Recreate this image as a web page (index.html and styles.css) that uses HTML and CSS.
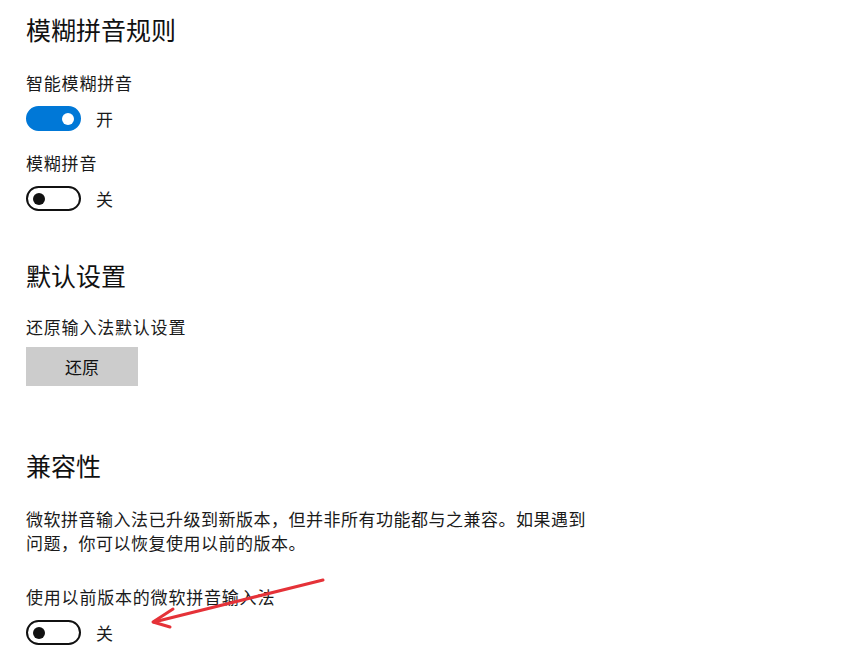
FILE: index.html
```html
<!DOCTYPE html>
<html lang="zh-CN">
<head>
    <meta charset="UTF-8">
    <meta name="viewport" content="width=device-width, initial-scale=1.0">
    <title>微软拼音 - 设置</title>
    <link rel="stylesheet" href="styles.css">
</head>
<body>

    <div class="page">

        <!-- 模糊拼音规则 -->
        <section class="section first">
            <h2>模糊拼音规则</h2>

            <div class="setting">
                <div class="label">智能模糊拼音</div>
                <div class="toggle-row">
                    <span class="toggle on"><span class="knob"></span></span>
                    <span class="state">开</span>
                </div>
            </div>

            <div class="setting">
                <div class="label">模糊拼音</div>
                <div class="toggle-row">
                    <span class="toggle"><span class="knob"></span></span>
                    <span class="state">关</span>
                </div>
            </div>
        </section>

        <!-- 默认设置 -->
        <section class="section defaults">
            <h2>默认设置</h2>
            <div class="label">还原输入法默认设置</div>
            <button class="btn">还原</button>
        </section>

        <!-- 兼容性 -->
        <section class="section compat">
            <h2>兼容性</h2>
            <p class="desc">微软拼音输入法已升级到新版本，但并非所有功能都与之兼容。如果遇到问题，你可以恢复使用以前的版本。</p>

            <div class="setting">
                <div class="label">使用以前版本的微软拼音输入法</div>
                <div class="toggle-row">
                    <span class="toggle"><span class="knob"></span></span>
                    <span class="state">关</span>
                </div>
            </div>
        </section>

        <!-- red annotation arrow -->
        <svg class="arrow" width="200" height="70" viewBox="140 568 200 70">
            <line x1="323" y1="580" x2="154" y2="622" stroke="#e53238" stroke-width="3" stroke-linecap="round"/>
            <polyline points="173,609 153,622 170,627" fill="none" stroke="#e53238" stroke-width="3" stroke-linecap="round" stroke-linejoin="round"/>
        </svg>
    </div>

</body>
</html>
```

FILE: styles.css
```css
* {
    margin: 0;
    padding: 0;
    box-sizing: border-box;
}

body {
    font-family: "Noto Sans CJK SC", "Noto Sans", sans-serif;
    background-color: #fff;
    color: #1a1a1a;
}

.page {
    position: relative;
    padding: 13px 26px 0 26px;
    min-height: 670px;
}

/* Section headings */
h2 {
    font-size: 25px;
    font-weight: 400;
    line-height: 32px;
    color: #111;
    margin-bottom: 26px;
}

.defaults {
    margin-top: 48px;
}

.defaults h2 {
    margin-bottom: 24px;
}

.compat {
    margin-top: 63px;
}

.compat h2 {
    margin-bottom: 26px;
}

/* Settings rows */
.label {
    font-size: 17px;
    line-height: 24px;
    letter-spacing: 0.8px;
}

.setting + .setting {
    margin-top: 20px;
}

.toggle-row {
    display: flex;
    align-items: center;
    gap: 15px;
    margin-top: 11px;
}

.state {
    font-size: 17px;
    line-height: 25px;
}

/* Toggle switch */
.toggle {
    display: flex;
    align-items: center;
    width: 55px;
    height: 25px;
    border: 2.5px solid #111;
    border-radius: 13px;
    padding: 0 5px;
}

.toggle .knob {
    width: 12px;
    height: 12px;
    border-radius: 50%;
    background-color: #111;
}

.toggle.on {
    background-color: #0078d7;
    border-color: #0078d7;
    justify-content: flex-end;
}

.toggle.on .knob {
    background-color: #fff;
}

/* Button */
.btn {
    display: block;
    margin-top: 8px;
    width: 112px;
    height: 39px;
    border: none;
    background-color: #cccccc;
    font-family: inherit;
    font-size: 17px;
    color: #111;
}

/* Description paragraph */
.desc {
    width: 570px;
    font-size: 17px;
    line-height: 24px;
    letter-spacing: 0.5px;
    margin-bottom: 30px;
}

.arrow {
    position: absolute;
    left: 140px;
    top: 568px;
}
```
